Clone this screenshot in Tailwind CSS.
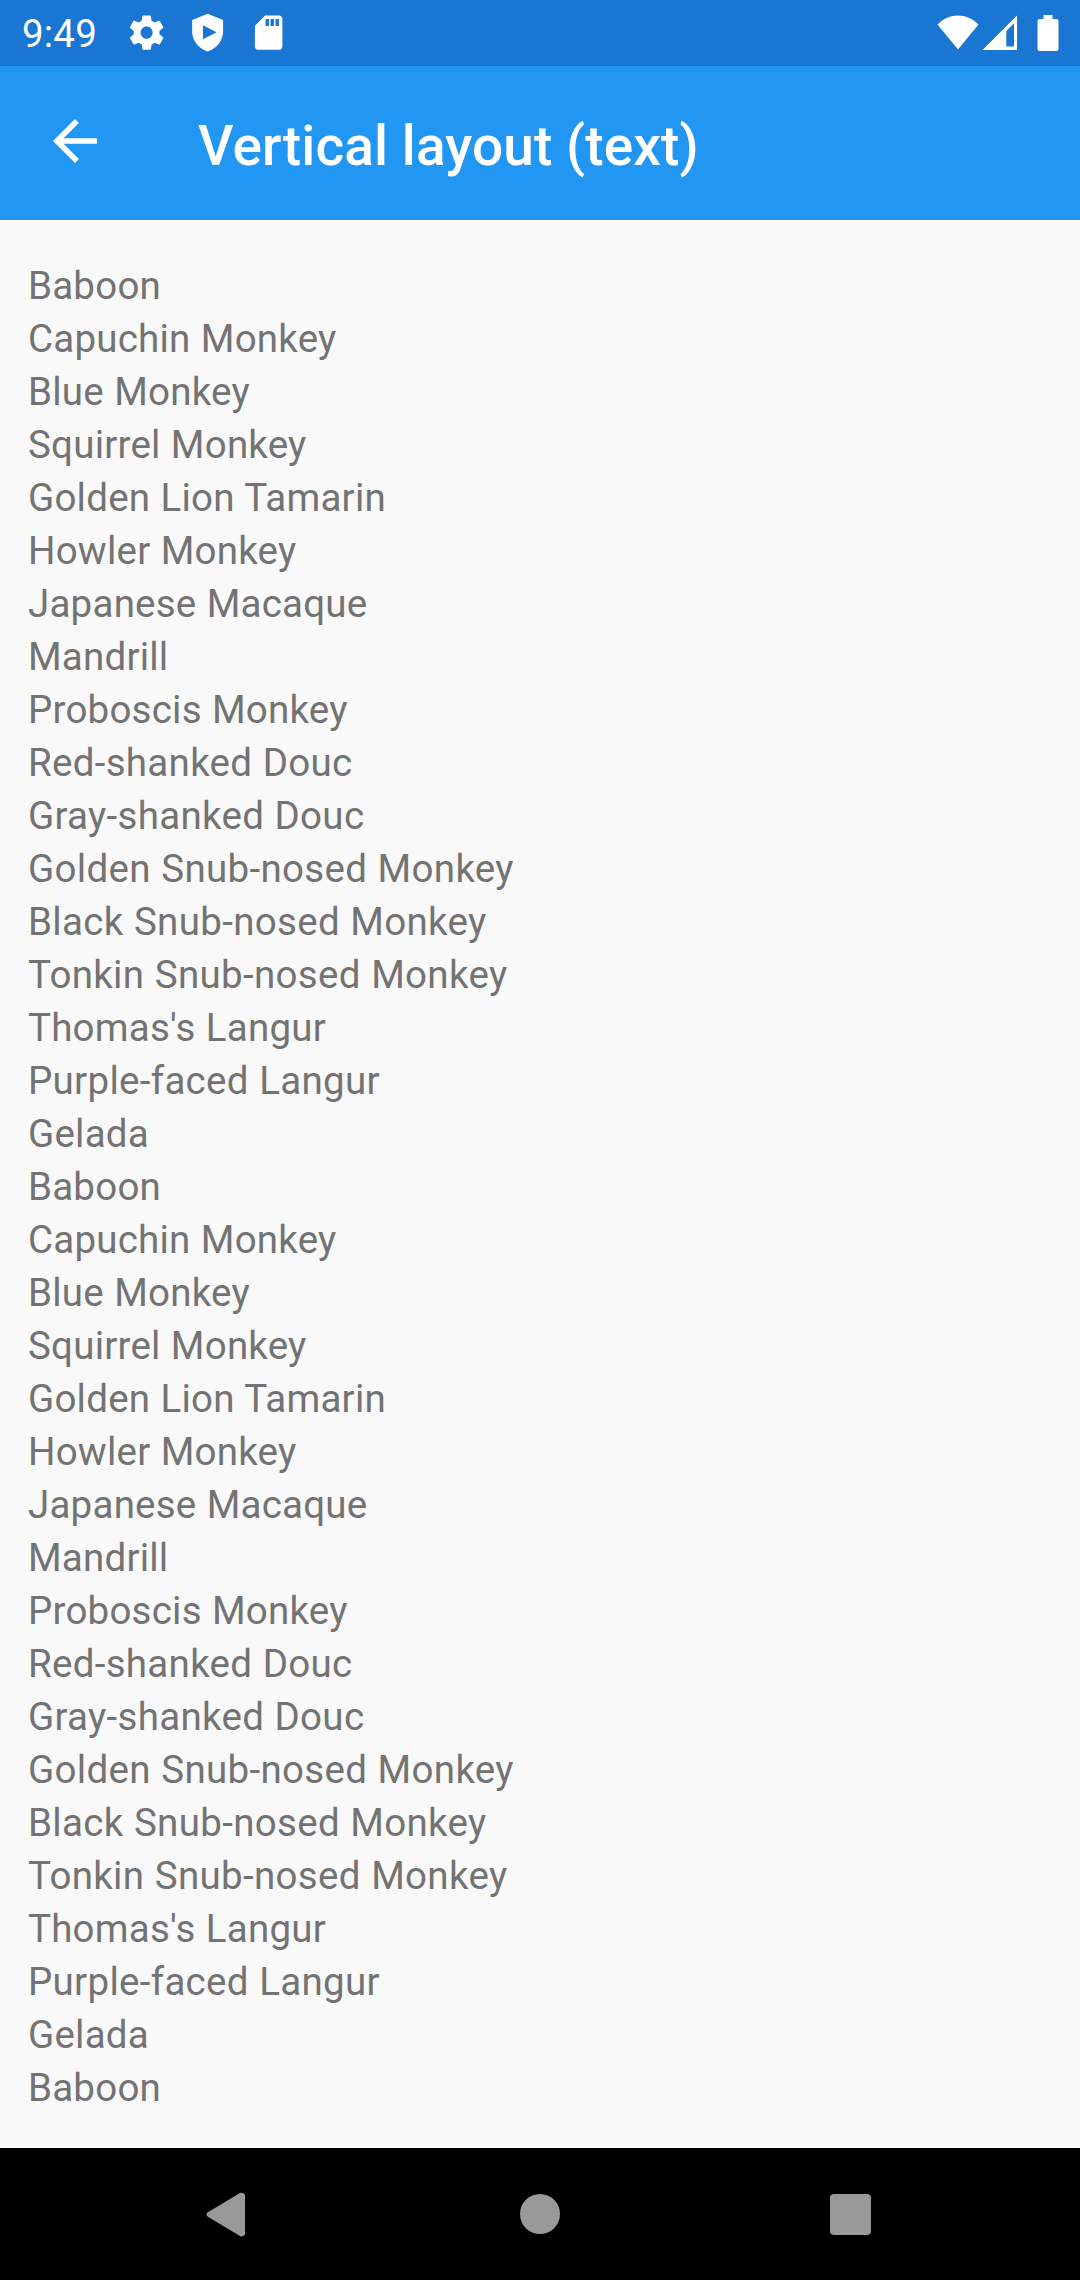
<!DOCTYPE html>
<html lang="en">
<head>
<meta charset="utf-8">
<title>Vertical layout (text)</title>
<script src="https://cdn.jsdelivr.net/npm/@tailwindcss/browser@4"></script>
</head>
<body class="w-[1080px] h-[2280px] overflow-hidden flex flex-col bg-[#fafafa] font-['Roboto',sans-serif]">
<header class="shrink-0 text-white">
  <div class="h-[66px] bg-[#1976d2] flex items-center pl-[22px] pr-[21px]">
    <span class="w-[104px] text-[38.5px] leading-[66px] pt-[2px] tracking-[0.2px]">9:49</span>
    <div class="flex items-center gap-[20px]">
      <svg class="size-[41.25px]" viewBox="0 0 24 24" fill="currentColor"><path d="M19.43 12.98c.04-.32.07-.64.07-.98s-.03-.66-.07-.98l2.11-1.65c.19-.15.24-.42.12-.64l-2-3.46c-.12-.22-.39-.3-.61-.22l-2.49 1c-.52-.4-1.08-.73-1.69-.98l-.38-2.65C14.46 2.18 14.25 2 14 2h-4c-.25 0-.46.18-.49.42l-.38 2.65c-.61.25-1.17.59-1.69.98l-2.49-1c-.23-.09-.49 0-.61.22l-2 3.46c-.13.22-.07.49.12.64l2.11 1.65c-.04.32-.07.65-.07.98s.03.66.07.98l-2.11 1.65c-.19.15-.24.42-.12.64l2 3.46c.12.22.39.3.61.22l2.49-1c.52.4 1.08.73 1.69.98l.38 2.65c.03.24.24.42.49.42h4c.25 0 .46-.18.49-.42l.38-2.65c.61-.25 1.17-.59 1.69-.98l2.49 1c.23.09.49 0 .61-.22l2-3.46c.12-.22.07-.49-.12-.64l-2.11-1.65zM12 15.500c-1.930 0-3.500-1.570-3.500-3.500s1.570-3.500 3.500-3.500 3.500 1.570 3.500 3.500-1.570 3.500-3.500 3.500z"/></svg>
      <svg class="size-[41.25px]" viewBox="0 0 24 24" fill="currentColor" fill-rule="evenodd"><path d="M12 1 3 4.600V11.500C3 16.700 7 21.500 12 23c5-1.500 9-6.300 9-11.500V4.600ZM9.300 7.700 17.200 11.800 9.300 15.900Z"/></svg>
      <svg class="size-[41.25px] -ml-px" viewBox="0 0 24 24" fill="currentColor"><path d="M18 2h-8L4.020 8 4 20c0 1.100.9 2 2 2h12c1.100 0 2-.9 2-2V4c0-1.100-.9-2-2-2zm-5.800 6.100h-2V4h2zm2.900 0h-2V4h2zm2.900 0h-2V4h2z"/></svg>
    </div>
    <div class="ml-auto flex items-center">
      <svg class="w-[42px] h-[36px]" viewBox="0 0 42 36" fill="currentColor"><path d="M.5 9.500C6.500 3.500 13.500.500 21 .500s14.500 3 20.500 9L21 34.500Z"/></svg>
      <svg class="w-[36px] h-[36px] ml-[3px]" viewBox="0 0 36 36" fill="currentColor" fill-rule="evenodd"><path d="M.5 35 35 .5V35ZM24.300 16v15.500H32V8.300Z"/></svg>
      <svg class="w-[22px] h-[36px] ml-[19px]" viewBox="0 0 22 36" fill="currentColor"><path d="M6.500 0h9v4H19.500a2 2 0 0 1 2 2V34a2 2 0 0 1-2 2H2.500a2 2 0 0 1-2-2V6a2 2 0 0 1 2-2h4Z"/></svg>
    </div>
  </div>
  <div class="h-[154px] bg-[#2196f3] flex items-start pl-[42px]">
    <svg class="size-[66px] mt-[42px]" viewBox="0 0 24 24" fill="currentColor"><path d="M20 11H7.830l5.590-5.590L12 4l-8 8 8 8 1.410-1.410L7.830 13H20v-2z"/></svg>
    <h1 class="ml-[90px] mt-[47px] text-[55px] leading-[66px] font-medium whitespace-nowrap tracking-[0.1px]">Vertical layout (text)</h1>
  </div>
</header>
<main class="flex-1 min-h-0 pt-[28px] pl-[28px] pr-[27px] pb-[27px]">
  <ul class="h-full bg-[#f9f9f9] pt-[11px] text-[38.5px] leading-[53px] text-[#737373] tracking-[0.22px] [word-spacing:0.5px]">
    <li>Baboon</li>
    <li>Capuchin Monkey</li>
    <li>Blue Monkey</li>
    <li>Squirrel Monkey</li>
    <li>Golden Lion Tamarin</li>
    <li>Howler Monkey</li>
    <li>Japanese Macaque</li>
    <li>Mandrill</li>
    <li>Proboscis Monkey</li>
    <li class="tracking-[0.3px]">Red-shanked Douc</li>
    <li class="tracking-[0.3px]">Gray-shanked Douc</li>
    <li class="tracking-[0.32px]">Golden Snub-nosed Monkey</li>
    <li class="tracking-[0.32px]">Black Snub-nosed Monkey</li>
    <li class="tracking-[0.32px]">Tonkin Snub-nosed Monkey</li>
    <li>Thomas's Langur</li>
    <li class="tracking-[0.3px]">Purple-faced Langur</li>
    <li>Gelada</li>
    <li>Baboon</li>
    <li>Capuchin Monkey</li>
    <li>Blue Monkey</li>
    <li>Squirrel Monkey</li>
    <li>Golden Lion Tamarin</li>
    <li>Howler Monkey</li>
    <li>Japanese Macaque</li>
    <li>Mandrill</li>
    <li>Proboscis Monkey</li>
    <li class="tracking-[0.3px]">Red-shanked Douc</li>
    <li class="tracking-[0.3px]">Gray-shanked Douc</li>
    <li class="tracking-[0.32px]">Golden Snub-nosed Monkey</li>
    <li class="tracking-[0.32px]">Black Snub-nosed Monkey</li>
    <li class="tracking-[0.32px]">Tonkin Snub-nosed Monkey</li>
    <li>Thomas's Langur</li>
    <li class="tracking-[0.3px]">Purple-faced Langur</li>
    <li>Gelada</li>
    <li>Baboon</li>
  </ul>
</main>
<nav class="shrink-0 h-[132px] bg-black text-[#999999] flex items-start pt-[44px] pl-[206px]">
  <svg class="w-[40px] h-[46px]" viewBox="0 0 40 46" fill="currentColor"><path d="M1.800 20.300 34 1.100Q36.500 0 39 2.500V42.500Q36.500 45.500 34 43.900L1.800 24.700Q-1 22.500 1.800 20.300Z"/></svg>
  <div class="size-[40px] rounded-full bg-[#999999] ml-[274px] mt-[2px]"></div>
  <div class="size-[41px] rounded-[4px] bg-[#999999] ml-[270px] mt-[2px]"></div>
</nav>
</body>
</html>
